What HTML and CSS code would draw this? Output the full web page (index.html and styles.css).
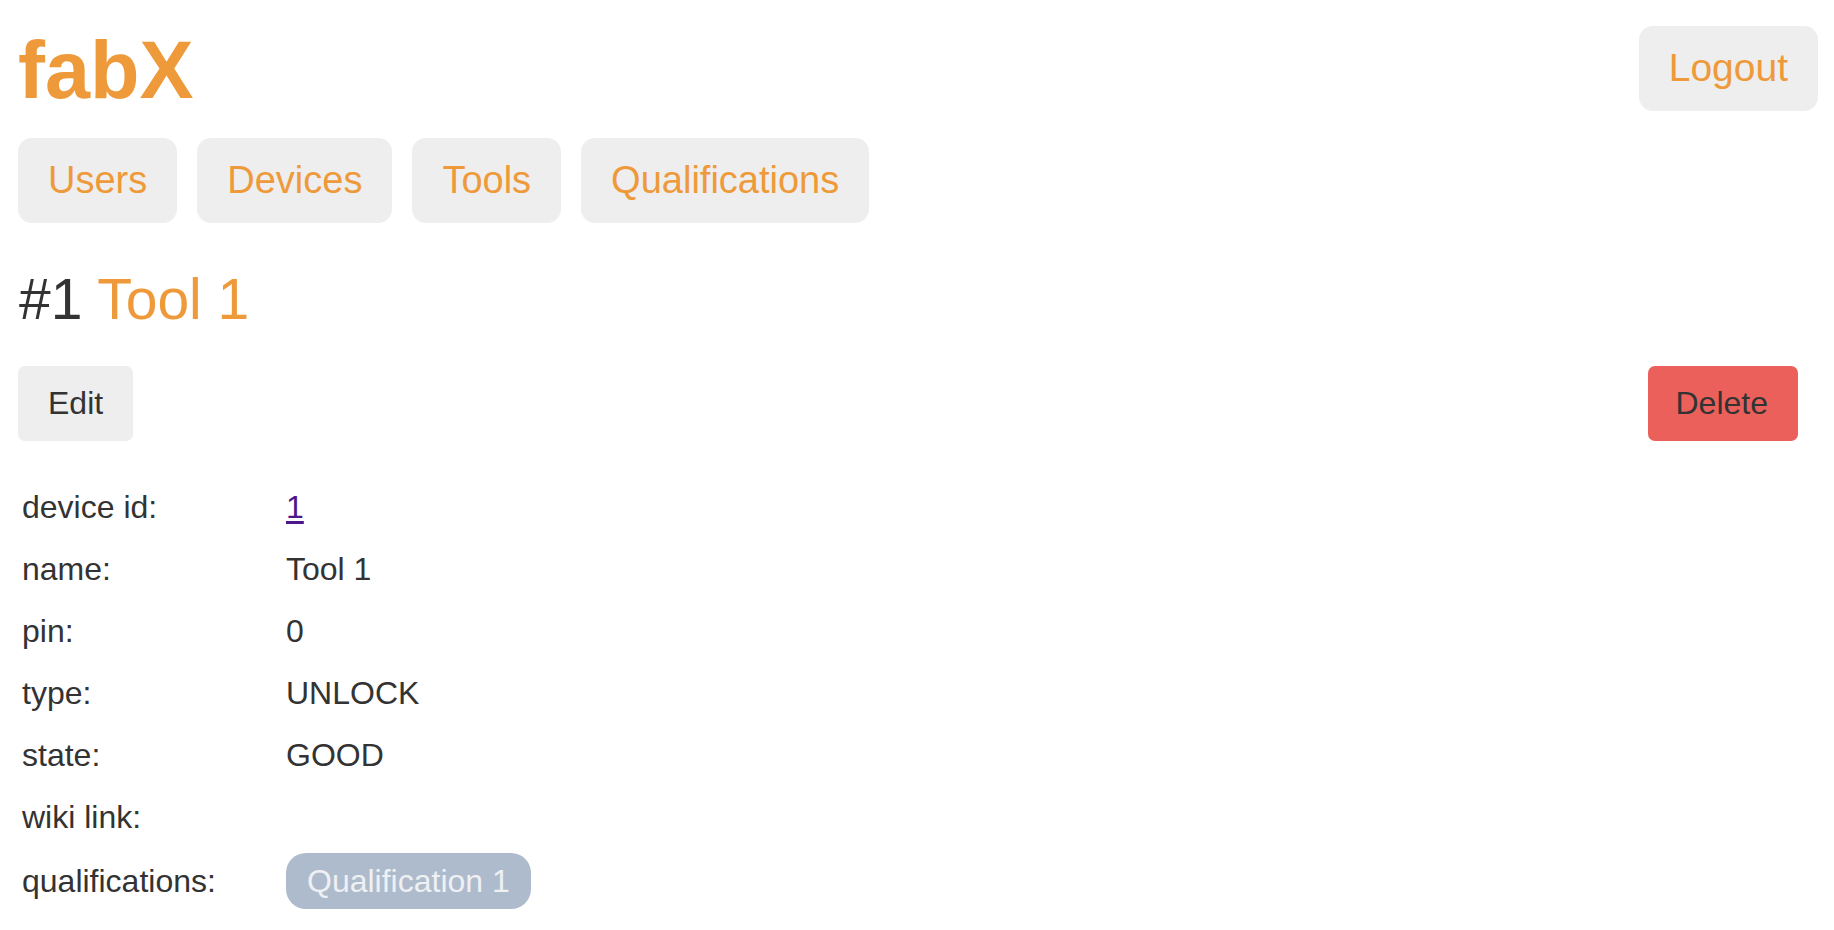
FILE: index.html
```html
<!DOCTYPE html>
<html lang="en">
<head>
<meta charset="utf-8">
<title>fabX - Tool 1</title>
<link rel="stylesheet" href="styles.css">
</head>
<body>
<div class="page">
  <header class="top">
    <h1 class="logo">fabX</h1>
    <a class="btn logout" href="#">Logout</a>
  </header>
  <nav class="nav">
    <a class="btn nav-btn" href="#">Users</a>
    <a class="btn nav-btn" href="#">Devices</a>
    <a class="btn nav-btn" href="#">Tools</a>
    <a class="btn nav-btn" href="#">Qualifications</a>
  </nav>
  <h2 class="title">#1 <span class="accent">Tool 1</span></h2>
  <div class="actions">
    <button class="act edit">Edit</button>
    <button class="act delete">Delete</button>
  </div>
  <table class="details">
    <tr><td class="label">device id:</td><td class="value"><a class="link" href="#">1</a></td></tr>
    <tr><td class="label">name:</td><td class="value">Tool 1</td></tr>
    <tr><td class="label">pin:</td><td class="value">0</td></tr>
    <tr><td class="label">type:</td><td class="value">UNLOCK</td></tr>
    <tr><td class="label">state:</td><td class="value">GOOD</td></tr>
    <tr><td class="label">wiki link:</td><td class="value"></td></tr>
    <tr class="qual-row"><td class="label">qualifications:</td><td class="value badge-cell"><span class="badge">Qualification 1</span></td></tr>
  </table>
</div>
</body>
</html>
```

FILE: styles.css
```css
html, body {
  margin: 0;
  padding: 0;
  background: #ffffff;
}

body {
  font-family: "Liberation Sans", Arial, Helvetica, sans-serif;
  font-size: 32px;
  color: #333333;
}

.page {
  padding: 26px 16px 0 18px;
}

.top {
  display: flex;
  justify-content: space-between;
  align-items: flex-start;
}

.logo {
  margin: 0;
  font-size: 81px;
  line-height: 88px;
  font-weight: bold;
  color: #ee9a3a;
}

.btn {
  display: inline-block;
  background: #eeeeee;
  color: #ee9a3a;
  text-decoration: none;
  font-size: 38px;
  line-height: 44px;
  border-radius: 14px;
}

.logout {
  padding: 20px 30px 21px 30px;
  font-size: 39px;
}

.nav {
  display: flex;
  gap: 20px;
  margin-top: 24px;
}

.nav-btn {
  padding: 20px 30px 21px 30px;
}

.title {
  margin: 43px 0 0 1px;
  font-size: 57px;
  line-height: 67px;
  font-weight: normal;
  color: #333333;
}

.accent {
  color: #ee9a3a;
}

.actions {
  display: flex;
  justify-content: space-between;
  align-items: flex-start;
  margin-top: 33px;
  padding-right: 20px;
}

.act {
  font-family: "Liberation Sans", Arial, Helvetica, sans-serif;
  font-size: 32px;
  line-height: 37px;
  padding: 19px 30px;
  border: none;
  border-radius: 7px;
  color: #333333;
  cursor: pointer;
}

.edit {
  background: #eeeeee;
}

.delete {
  background: #eb605a;
  padding: 19px 30px 19px 28px;
}

.details {
  margin-top: 35px;
  border-collapse: collapse;
  border-spacing: 0;
}

.details td {
  padding: 12px 4px;
  line-height: 38px;
  vertical-align: middle;
}

.details .label {
  width: 254px;
}

.details .value {
  padding-left: 6px;
}

.link {
  color: #4e1689;
  text-decoration: underline;
  text-underline-offset: 3px;
}

.qual-row td {
  padding-top: 5px;
  padding-bottom: 5px;
}

.badge {
  display: inline-block;
  background: #aebbcc;
  color: #eef0f3;
  padding: 9px 21px;
  line-height: 38px;
  border-radius: 20px;
}
```
